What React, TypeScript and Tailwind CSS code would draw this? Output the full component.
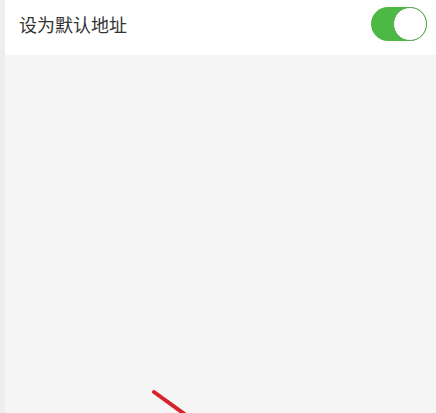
export default function App() {
  return (
    <div
      className="relative flex h-[413px] w-[436px] overflow-hidden bg-[#f5f5f5]"
      style={{ fontFamily: '"Noto Sans CJK SC", "Noto Sans", sans-serif' }}
    >
      <div className="w-[5px] bg-[#eeeeee]" />
      <div className="flex flex-1 flex-col">
        <div className="flex h-[55px] items-center justify-between bg-white pb-[8px] pl-[14px] pr-[9px]">
          <span className="text-[18px] leading-none text-[#333333]">设为默认地址</span>
          <div className="flex h-[34px] w-[56px] items-center justify-end rounded-full bg-[#4cb944]">
            <div className="h-[34px] w-[34px] rounded-full border border-[#5aa84f] bg-white" />
          </div>
        </div>
        <div className="flex-1" />
      </div>
      {/* red arrow, cut off at bottom */}
      <svg className="absolute left-0 top-0" width="436" height="413">
        <line x1="154" y1="392" x2="190" y2="418" stroke="#d8232a" strokeWidth="4" strokeLinecap="round" />
      </svg>
    </div>
  );
}
